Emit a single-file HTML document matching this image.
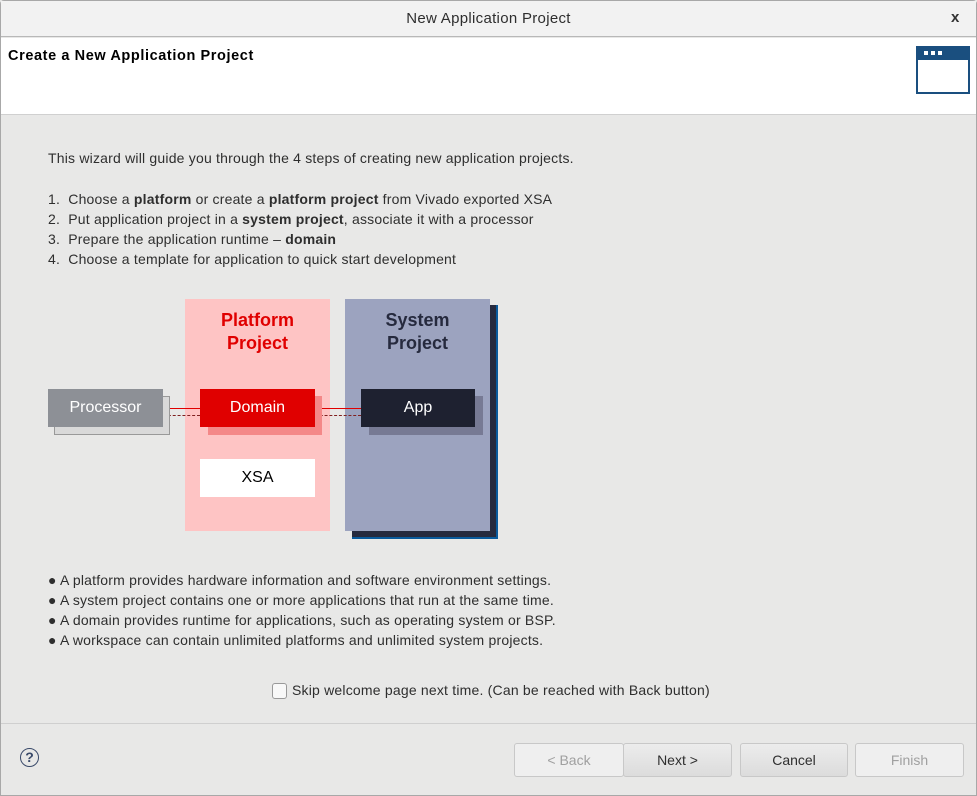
<!DOCTYPE html>
<html><head><style>
*{margin:0;padding:0;box-sizing:border-box}
body{width:977px;height:796px;overflow:hidden;background:#e8e8e7;font-family:"Liberation Sans",sans-serif;color:#2e2e2e;position:relative}
.a{position:absolute}
.t{font-size:14px;white-space:nowrap;letter-spacing:0.2px}
.box{position:absolute;display:flex;align-items:center;justify-content:center;font-size:16px}
.btn{position:absolute;top:743px;height:34px;border:1px solid #c8c8c8;border-radius:3px;font-size:14px;display:flex;align-items:center;justify-content:center;background:linear-gradient(#ececec,#dcdcdc)}
.dis{background:#efefef;color:#a0a0a0}
</style></head><body>
<div class="a" style="left:0;top:0;width:977px;height:796px;border:1px solid #a8a8a8;border-radius:4px 4px 0 0"></div>
<div class="a" style="left:1px;top:1px;width:975px;height:36px;background:#f2f2f2;border-bottom:1px solid #b8b8b8"></div>
<div class="a t" style="left:0;width:977px;top:10px;text-align:center;font-size:15px;color:#2e2e2e;letter-spacing:0.3px">New Application Project</div>
<div class="a" style="left:951px;top:9px;font-size:15px;font-weight:bold;color:#333">x</div>
<div class="a" style="left:1px;top:38px;width:975px;height:77px;background:#fff;border-bottom:1px solid #d0d0d0"></div>
<div class="a t" style="left:8px;top:48px;font-weight:bold;color:#000;font-size:14.5px;letter-spacing:0.6px">Create a New Application Project</div>
<div class="a" style="left:916px;top:46px;width:54px;height:48px;border:2px solid #1a4f7f;background:#fff"><div style="height:12px;background:#1a4f7f;position:relative"><span style="position:absolute;left:6px;top:3px;width:4px;height:4px;background:#fff"></span><span style="position:absolute;left:13px;top:3px;width:4px;height:4px;background:#fff"></span><span style="position:absolute;left:20px;top:3px;width:4px;height:4px;background:#fff"></span></div></div>

<div class="a t" style="left:48px;top:150px">This wizard will guide you through the 4 steps of creating new application projects.</div>
<div class="a t" style="left:48px;top:189px;line-height:20px">1.&nbsp; Choose a <b>platform</b> or create a <b>platform project</b> from Vivado exported XSA<br>2.&nbsp; Put application project in a <b>system project</b>, associate it with a processor<br>3.&nbsp; Prepare the application runtime – <b>domain</b><br>4.&nbsp; Choose a template for application to quick start development</div>

<div class="a" style="left:185px;top:299px;width:145px;height:232px;background:#fec4c4"></div>
<div class="a" style="left:352px;top:305px;width:146px;height:234px;background:#262a3e;border:2px solid #0a5a9c;border-left:none;border-top:none"></div>
<div class="a" style="left:345px;top:299px;width:145px;height:232px;background:#9ca3bf"></div>
<div class="a" style="left:185px;top:309px;width:145px;text-align:center;font-size:18px;font-weight:bold;color:#e00000;line-height:23px">Platform<br>Project</div>
<div class="a" style="left:345px;top:309px;width:145px;text-align:center;font-size:18px;font-weight:bold;color:#262a3e;line-height:23px">System<br>Project</div>
<div class="a" style="left:163px;top:408px;width:37px;border-top:1px solid #e00000"></div>
<div class="a" style="left:163px;top:415px;width:37px;border-top:1px dashed #802020"></div>
<div class="a" style="left:315px;top:408px;width:46px;border-top:1px solid #e00000"></div>
<div class="a" style="left:315px;top:415px;width:46px;border-top:1px dashed #802020"></div>
<div class="a" style="left:54px;top:396px;width:116px;height:39px;background:#d9d9d9;border:1px solid #999"></div>
<div class="box" style="left:48px;top:389px;width:115px;height:38px;background:#8d9096;color:#fff">Processor</div>
<div class="a" style="left:208px;top:396px;width:114px;height:39px;background:#f48888"></div>
<div class="box" style="left:200px;top:389px;width:115px;height:38px;background:#e00000;color:#fff">Domain</div>
<div class="box" style="left:200px;top:459px;width:115px;height:38px;background:#fff;color:#000">XSA</div>
<div class="a" style="left:369px;top:396px;width:114px;height:39px;background:#777a94"></div>
<div class="box" style="left:361px;top:389px;width:114px;height:38px;background:#1e2130;color:#fff">App</div>

<div class="a t" style="left:48px;top:570px;line-height:20px">● A platform provides hardware information and software environment settings.<br>● A system project contains one or more applications that run at the same time.<br>● A domain provides runtime for applications, such as operating system or BSP.<br>● A workspace can contain unlimited platforms and unlimited system projects.</div>

<div class="a" style="left:272px;top:683px;width:15px;height:16px;border:1px solid #999;border-radius:3px;background:#f8f8f8"></div>
<div class="a t" style="left:292px;top:682px">Skip welcome page next time. (Can be reached with Back button)</div>
<div class="a" style="left:1px;top:723px;width:975px;border-top:1px solid #cfcfcf"></div>
<div class="a" style="left:20px;top:748px;width:19px;height:19px;border:1.5px solid #3a4a6a;border-radius:50%;text-align:center;font-size:14px;font-weight:bold;color:#3a4a6a;line-height:17px">?</div>
<div class="btn dis" style="left:514px;width:110px">&lt; Back</div>
<div class="btn" style="left:623px;width:109px">Next &gt;</div>
<div class="btn" style="left:740px;width:108px">Cancel</div>
<div class="btn dis" style="left:855px;width:109px">Finish</div>
</body></html>
